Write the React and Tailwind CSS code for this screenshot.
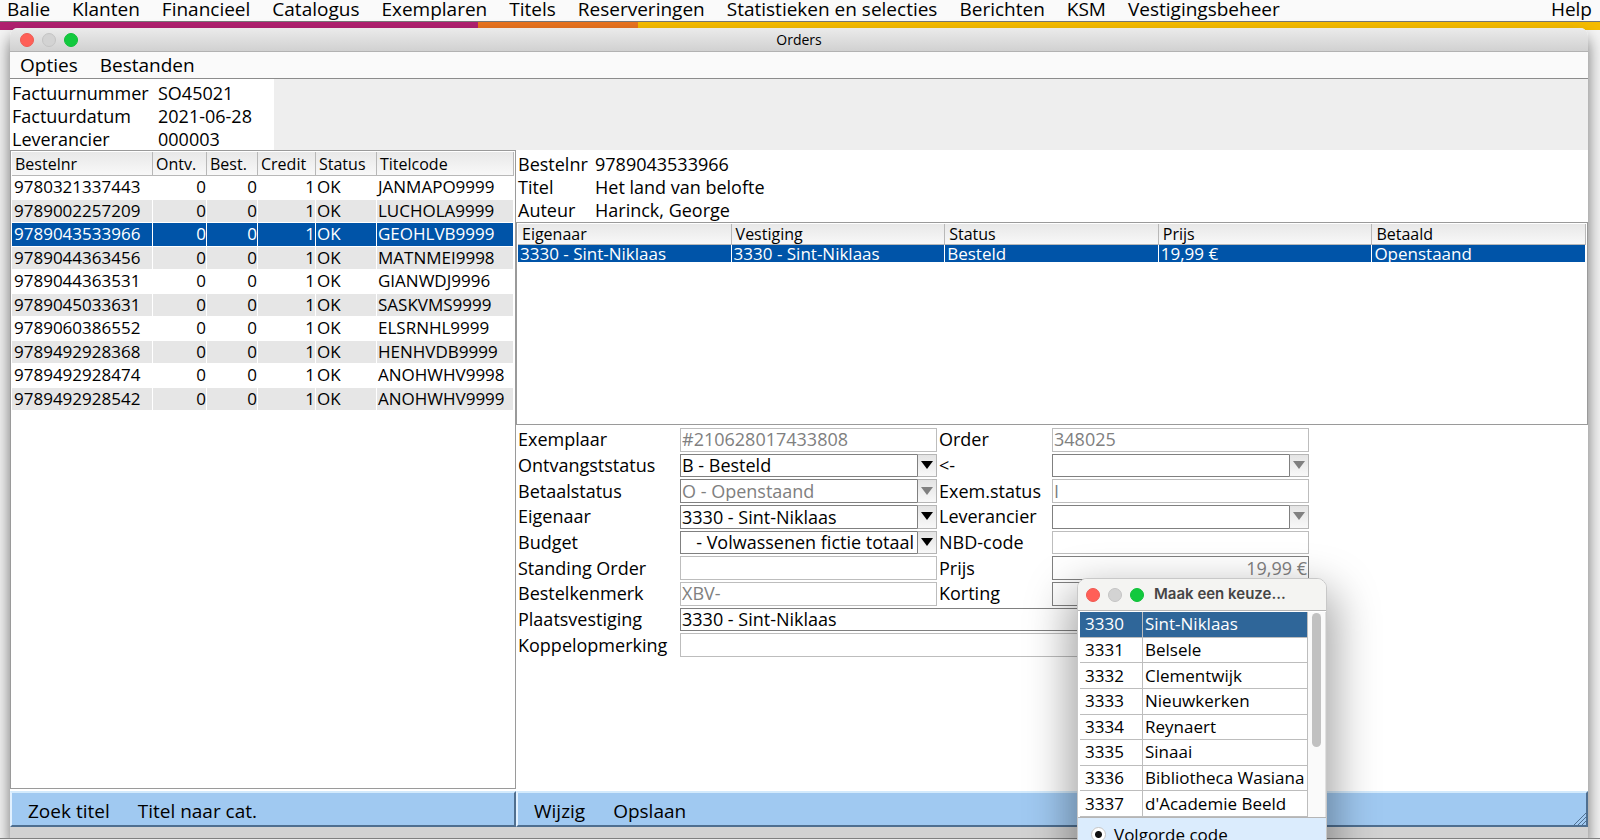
import clsx from "clsx";

const mainMenu = [
  "Balie",
  "Klanten",
  "Financieel",
  "Catalogus",
  "Exemplaren",
  "Titels",
  "Reserveringen",
  "Statistieken en selecties",
  "Berichten",
  "KSM",
  "Vestigingsbeheer",
];

const orders = [
  ["9780321337443", "JANMAPO9999"],
  ["9789002257209", "LUCHOLA9999"],
  ["9789043533966", "GEOHLVB9999"],
  ["9789044363456", "MATNMEI9998"],
  ["9789044363531", "GIANWDJ9996"],
  ["9789045033631", "SASKVMS9999"],
  ["9789060386552", "ELSRNHL9999"],
  ["9789492928368", "HENHVDB9999"],
  ["9789492928474", "ANOHWHV9998"],
  ["9789492928542", "ANOHWHV9999"],
];

const branches = [
  ["3330", "Sint-Niklaas"],
  ["3331", "Belsele"],
  ["3332", "Clementwijk"],
  ["3333", "Nieuwkerken"],
  ["3334", "Reynaert"],
  ["3335", "Sinaai"],
  ["3336", "Bibliotheca Wasiana"],
  ["3337", "d'Academie Beeld"],
];

function Lights({ className }) {
  return (
    <div className={clsx("flex items-center gap-2", className)}>
      <button type="button" aria-label="Sluiten" className="size-[14px] rounded-full border border-[#ee5a52] bg-[#ff5f57]" />
      <button type="button" aria-label="Minimaliseren" className="size-[14px] rounded-full border border-[#c4c4c4] bg-[#d3d3d3]" />
      <button type="button" aria-label="Vergroten" className="size-[14px] rounded-full border border-[#0fbf38] bg-[#12c93e]" />
    </div>
  );
}

function Label({ id, children }) {
  return (
    <label htmlFor={id} className="self-center whitespace-nowrap pb-[3px] pl-[2px] leading-5">
      {children}
    </label>
  );
}

function Field({ id, value = "", dark, className }) {
  return (
    <input
      id={id}
      defaultValue={value}
      readOnly
      className={clsx(
        "mb-[2px] min-w-0 border bg-white px-px text-[#808080] outline-none",
        dark ? "border-[#808080]" : "border-[#bdbdbd]",
        className
      )}
    />
  );
}

function Combo({ id, value = "", disabled, gray, alignEnd, className }) {
  return (
    <div className={clsx("relative mb-[2px] flex min-w-0", className)}>
      <select
        id={id}
        disabled={disabled}
        className={clsx(
          "w-full min-w-0 appearance-none border border-[#808080] bg-white pl-px pr-[22px] leading-5 opacity-100 outline-none",
          gray ? "text-[#808080]" : "text-black",
          alignEnd && "text-right"
        )}
      >
        <option>{value}</option>
      </select>
      <span className="pointer-events-none absolute inset-y-0 right-0 flex w-5 items-center justify-center border border-[#b5b5b5] border-l-[#808080] bg-linear-to-b from-[#e4e4e4] to-[#f8f8f8]">
        <svg viewBox="0 0 12 8" className={clsx("mb-px h-2 w-3", disabled ? "fill-[#808080]" : "fill-black")}>
          <path d="M0 0h12L6 8z" />
        </svg>
      </span>
    </div>
  );
}

const headCell =
  "border-r border-[#b8b8b8] text-left font-normal whitespace-nowrap";

function OrdersTable() {
  return (
    <table className="h-[259px] w-full table-fixed border-separate border-spacing-0">
      <colgroup>
        <col className="w-[141px]" />
        <col className="w-[54px]" />
        <col className="w-[51px]" />
        <col className="w-[58px]" />
        <col className="w-[61px]" />
        <col />
      </colgroup>
      <thead>
        <tr className="h-[24px] bg-linear-to-b from-[#e8e8e8] to-[#f9f9f9] text-base leading-5">
          {["Bestelnr", "Ontv.", "Best.", "Credit", "Status", "Titelcode"].map((h) => (
            <th key={h} className={clsx(headCell, "border-b pl-[3px]")}>{h}</th>
          ))}
        </tr>
      </thead>
      <tbody className="text-[17px] leading-5">
        {orders.map(([nr, code], i) => {
          const cell = clsx(
            "border-b border-r border-white p-0",
            i === 2 ? "bg-[#0054a8] text-white" : i % 2 ? "bg-[#e6e6e6]" : "bg-white"
          );
          return (
            <tr key={nr}>
              <td className={clsx(cell, "pl-[2px]")}>{nr}</td>
              <td className={clsx(cell, "text-right")}>0</td>
              <td className={clsx(cell, "text-right")}>0</td>
              <td className={clsx(cell, "text-right")}>1</td>
              <td className={clsx(cell, "pl-px")}>OK</td>
              <td className={clsx(cell, "pl-px")}>{code}</td>
            </tr>
          );
        })}
      </tbody>
    </table>
  );
}

function CopiesTable() {
  return (
    <table className="w-full table-fixed border-separate border-spacing-0 leading-4">
      <thead>
        <tr className="h-[21px] bg-linear-to-b from-[#e8e8e8] to-[#f9f9f9] text-base leading-4">
          {["Eigenaar", "Vestiging", "Status", "Prijs", "Betaald"].map((h) => (
            <th key={h} className={clsx(headCell, "border-b pl-1")}>{h}</th>
          ))}
        </tr>
      </thead>
      <tbody>
        <tr className="bg-[#0054a8] text-[17px] leading-[17px] text-white">
          {["3330 - Sint-Niklaas", "3330 - Sint-Niklaas", "Besteld", "19,99 €", "Openstaand"].map((v, i) => (
            <td key={i} className="border-r border-white py-0 pl-[2px] pr-0">{v}</td>
          ))}
        </tr>
      </tbody>
    </table>
  );
}

function OrderForm() {
  return (
    <form className="grid h-[231px] w-[794px] grid-cols-[164px_257px_115px_257px] grid-rows-9">
      <Label id="exemplaar">Exemplaar</Label>
      <Field id="exemplaar" value="#210628017433808" />
      <Label id="order">Order</Label>
      <Field id="order" value="348025" />

      <Label id="ontvangst">Ontvangststatus</Label>
      <Combo id="ontvangst" value="B - Besteld" />
      <Label id="pijl">&lt;-</Label>
      <Combo id="pijl" disabled />

      <Label id="betaal">Betaalstatus</Label>
      <Combo id="betaal" value="O - Openstaand" disabled gray />
      <Label id="exemstatus">Exem.status</Label>
      <Field id="exemstatus" value="I" />

      <Label id="eigenaar">Eigenaar</Label>
      <Combo id="eigenaar" value="3330 - Sint-Niklaas" />
      <Label id="leverancier">Leverancier</Label>
      <Combo id="leverancier" disabled />

      <Label id="budget">Budget</Label>
      <Combo id="budget" value="- Volwassenen fictie totaal" alignEnd />
      <Label id="nbd">NBD-code</Label>
      <Field id="nbd" />

      <Label id="standing">Standing Order</Label>
      <Field id="standing" />
      <Label id="prijs">Prijs</Label>
      <Field id="prijs" value="19,99 €" dark className="text-right" />

      <Label id="kenmerk">Bestelkenmerk</Label>
      <Field id="kenmerk" value="XBV-" />
      <Label id="korting">Korting</Label>
      <Field id="korting" dark />

      <Label id="plaats">Plaatsvestiging</Label>
      <Combo id="plaats" value="3330 - Sint-Niklaas" className="col-span-3" />

      <Label id="koppel">Koppelopmerking</Label>
      <Field id="koppel" className="col-span-3" />
    </form>
  );
}

function ActionBar({ items, grip }) {
  return (
    <div className="relative flex h-9 items-center gap-7 border-2 border-[#4f6f90] border-l-[#e2f1ff] border-t-[#d3eafc] bg-[#a0c9f1] pl-4 pt-1 text-[19px]">
      {items.map((item) => (
        <button key={item} type="button">{item}</button>
      ))}
      {grip && (
        <svg viewBox="0 0 12 12" className="absolute right-0 bottom-0 size-3" stroke="#4f6f90" fill="none">
          <path d="M0 12 12 0M4 12l8-8M8 12l4-4" />
        </svg>
      )}
    </div>
  );
}

function BranchDialog() {
  return (
    <section className="absolute top-[578px] left-[1077px] z-10 w-[250px] overflow-hidden rounded-t-[10px] border border-[#c8c8c8] bg-white text-[17px] shadow-[0_20px_44px_8px_rgba(0,0,0,0.36)]">
      <header className="flex h-8 items-center border-b border-[#b5b5b5] bg-[#f4f4f2] pl-2 font-['Inter',sans-serif]">
        <Lights />
        <h2 className="ml-[10px] text-[15px] font-semibold text-[#454545]">Maak een keuze...</h2>
      </header>
      <div className="flex border-b border-[#b5b5b5] pl-[2px] pt-px">
        <table className="h-[205px] w-[228px] table-fixed border-separate border-spacing-0 leading-5">
          <colgroup>
            <col className="w-[63px]" />
            <col />
          </colgroup>
          <tbody>
            {branches.map(([code, name], i) => (
              <tr key={code} className={clsx(i === 0 && "bg-[#2f6699] text-white")}>
                <td className="border-b border-r border-[#bdbdbd] py-0 pr-0 pl-[5px]">{code}</td>
                <td className="whitespace-nowrap border-b border-r border-[#bdbdbd] py-0 pr-0 pl-[2px]">{name}</td>
              </tr>
            ))}
          </tbody>
        </table>
        <div className="flex flex-1 justify-center border-r border-[#e0e0e0] bg-[#fafafa]">
          <div className="mt-px h-[134px] w-[9px] rounded-full bg-[#c1c1c1]" />
        </div>
      </div>
      <div className="bg-[#dbecfd] pt-1 pb-3 pl-[13px]">
        <label className="flex items-center gap-2">
          <input
            type="radio"
            name="volgorde"
            defaultChecked
            className="size-[15px] appearance-none rounded-full border border-[#c4c4c4] bg-white checked:bg-[radial-gradient(circle,#111_3px,#fff_4px)]"
          />
          Volgorde code
        </label>
      </div>
    </section>
  );
}

export default function App() {
  return (
    <div className="relative flex h-screen flex-col overflow-hidden bg-[#f4f4f4] font-['Open_Sans',sans-serif] text-[18px] text-black">
      <nav className="flex h-[22px] shrink-0 items-center gap-[22px] border-b border-[#777] bg-[#fafafa] pr-2 pb-1 pl-[7px] text-[19px] leading-5">
        {mainMenu.map((item) => (
          <button key={item} type="button" className="whitespace-nowrap">{item}</button>
        ))}
        <button type="button" className="ml-auto">Help</button>
      </nav>
      <div className="flex h-2 shrink-0">
        <div className="w-[478px] bg-[#b0206f]" />
        <div className="w-40 bg-[#e8731f]" />
        <div className="flex-1 bg-[#f5bb00]" />
      </div>

      <main className="relative -mt-[2px] mr-3 ml-[10px] flex min-h-0 flex-1 flex-col rounded-t-lg bg-white shadow-[0_10px_16px_0_rgba(0,0,0,0.55)]">
        <header className="grid h-6 shrink-0 grid-cols-3 items-center rounded-t-lg border-b border-[#b2b2b2] bg-linear-to-b from-[#ebebeb] to-[#d1d1d1]">
          <Lights className="pl-[10px]" />
          <h1 className="text-center text-[14px] leading-5">Orders</h1>
        </header>
        <nav className="flex h-[27px] shrink-0 items-center gap-[22px] border-b border-[#8c8c8c] bg-[#fafafa] pl-[10px] text-[19px] leading-5">
          <button type="button">Opties</button>
          <button type="button">Bestanden</button>
        </nav>

        <div className="flex h-[71px] shrink-0 bg-[#eee]">
          <dl className="grid w-[264px] grid-cols-[146px_1fr] content-end gap-y-[3px] bg-white pb-px pl-[2px] leading-5">
            <dt>Factuurnummer</dt>
            <dd>SO45021</dd>
            <dt>Factuurdatum</dt>
            <dd>2021-06-28</dd>
            <dt>Leverancier</dt>
            <dd>000003</dd>
          </dl>
        </div>

        <div className="flex min-h-0 flex-1">
          <section className="flex w-[506px] shrink-0 flex-col">
            <div className="mb-[2px] flex-1 border border-[#9a9a9a] p-px">
              <OrdersTable />
            </div>
            <ActionBar items={["Zoek titel", "Titel naar cat."]} />
          </section>
          <section className="flex min-w-0 flex-1 flex-col">
            <dl className="grid h-[72px] grid-cols-[77px_1fr] content-end gap-y-[3px] pb-[2px] pl-[2px] leading-5">
              <dt>Bestelnr</dt>
              <dd>9789043533966</dd>
              <dt>Titel</dt>
              <dd>Het land van belofte</dd>
              <dt>Auteur</dt>
              <dd>Harinck, George</dd>
            </dl>
            <div className="mb-[3px] h-[203px] border border-[#9a9a9a] p-px">
              <CopiesTable />
            </div>
            <OrderForm />
            <div className="mt-auto">
              <ActionBar items={["Wijzig", "Opslaan"]} grip />
            </div>
          </section>
        </div>
        <footer className="h-[11px] shrink-0 bg-[#d2d2d2]" />
      </main>
      <div className="relative h-[2px] shrink-0 border-t border-[#808080] bg-[#eee]" />
      <BranchDialog />
    </div>
  );
}
